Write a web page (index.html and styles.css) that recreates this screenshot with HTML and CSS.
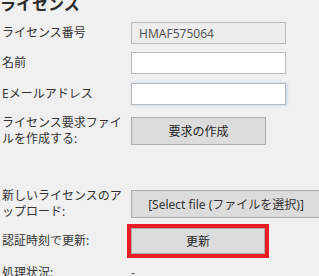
FILE: index.html
```html
<!DOCTYPE html>
<html lang="ja">
<head>
  <meta charset="UTF-8" />
  <title>ライセンス</title>
  <link rel="stylesheet" href="styles.css">
</head>
<body>
  <h1 class="title">ライセンス</h1>

  <div class="form">
    <div class="row">
      <label class="label">ライセンス番号</label>
      <input type="text" class="field readonly" value="HMAF575064" readonly>
    </div>
    <div class="row">
      <label class="label">名前</label>
      <input type="text" class="field">
    </div>
    <div class="row row-email">
      <label class="label">Eメールアドレス</label>
      <input type="text" class="field focused">
    </div>
    <div class="row row-request">
      <label class="label">ライセンス要求ファイルを作成する:</label>
      <button class="btn btn-request">要求の作成</button>
    </div>
    <div class="row row-upload">
      <label class="label">新しいライセンスのアップロード:</label>
      <button class="btn btn-file">[Select file (ファイルを選択)]</button>
    </div>
    <div class="row row-update">
      <label class="label">認証時刻で更新:</label>
      <button class="btn btn-update">更新</button>
    </div>
    <div class="row row-status">
      <label class="label">処理状況:</label>
      <span class="status">-</span>
    </div>
  </div>
</body>
</html>
```

FILE: styles.css
```css
body {
  margin: 0;
  padding: 0 0 0 2px;
  background: #f0f0f0;
  color: #333;
  font-family: "Noto Sans", "Noto Sans CJK JP", sans-serif;
  font-size: 12px;
  overflow: hidden;
}
.title {
  margin: -4px 0 0 -2px;
  font-size: 16px;
  line-height: 16px;
  font-weight: bold;
  color: #2b2b2b;
}
.form {
  margin-top: 10px;
}
.row {
  display: flex;
  align-items: center;
  margin-bottom: 8px;
}
.row-email {
  margin-top: 9px;
}
.row-request {
  margin-top: 10px;
}
.row-upload {
  margin-top: 41px;
}
.row-update {
  margin-top: 7px;
}
.row-status {
  margin-top: 10px;
}
.label {
  width: 125px;
  flex: none;
  margin-right: 4px;
  line-height: 16px;
}
.field {
  box-sizing: border-box;
  width: 155px;
  height: 22px;
  margin: 0;
  padding: 0 7px;
  border: 1px solid #b9b9b9;
  background: #fff;
  font-family: "Noto Sans", "Noto Sans CJK JP", sans-serif;
  font-size: 12px;
  color: #555;
  outline: none;
}
.field.readonly {
  background: #ededed;
}
.field.focused {
  box-shadow: 1px 0 3px rgba(120, 170, 230, 0.45);
}
.btn {
  box-sizing: border-box;
  height: 28px;
  margin: 0;
  padding: 0;
  border: 1px solid #adadad;
  background: #dcdcdc;
  font-family: "Noto Sans", "Noto Sans CJK JP", sans-serif;
  font-size: 12px;
  color: #1e1e1e;
}
.btn-request {
  width: 135px;
}
.btn-file {
  width: 190px;
  flex: none;
  color: #333;
}
.btn-update {
  width: 134px;
  height: 26px;
  outline: 4px solid #ec1c24;
}
.status {
  color: #555;
}
```
